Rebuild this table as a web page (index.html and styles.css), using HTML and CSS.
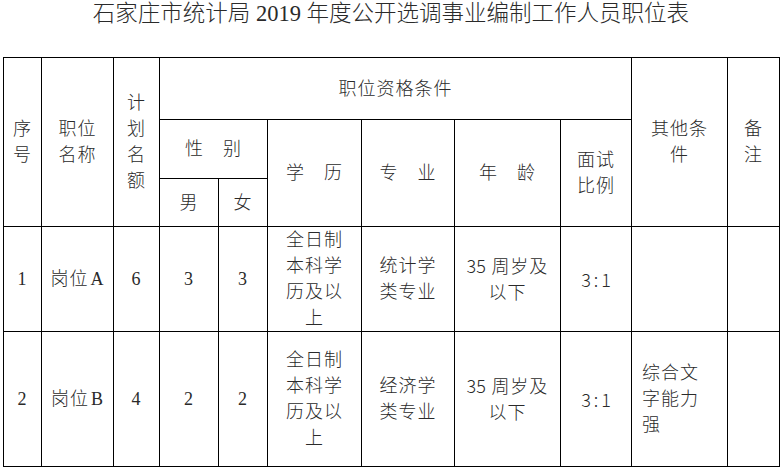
FILE: index.html
```html
<!DOCTYPE html>
<html lang="zh-CN">
<head>
<meta charset="utf-8">
<title>职位表</title>
<link rel="stylesheet" href="styles.css">
</head>
<body>
<h1 class="title">石家庄市统计局 2019 年度公开选调事业编制工作人员职位表</h1>
<table class="grid">
  <colgroup>
    <col class="c1"><col class="c2"><col class="c3"><col class="c4"><col class="c5"><col class="c6">
    <col class="c7"><col class="c8"><col class="c9"><col class="c10"><col class="c11">
  </colgroup>
  <tr class="h1">
    <td rowspan="3">序<br>号</td>
    <td rowspan="3">职位<br>名称</td>
    <td rowspan="3">计<br>划<br>名<br>额</td>
    <td colspan="6">职位资格条件</td>
    <td rowspan="3">其他条<br>件</td>
    <td rowspan="3">备<br>注</td>
  </tr>
  <tr class="h2">
    <td colspan="2">性　别</td>
    <td rowspan="2">学　历</td>
    <td rowspan="2">专　业</td>
    <td rowspan="2">年　龄</td>
    <td rowspan="2">面试<br>比例</td>
  </tr>
  <tr class="h3">
    <td>男</td>
    <td>女</td>
  </tr>
  <tr class="r1">
    <td>1</td>
    <td>岗位<span class="lat">A</span></td>
    <td>6</td>
    <td>3</td>
    <td>3</td>
    <td>全日制<br>本科学<br>历及以<br>上</td>
    <td>统计学<br>类专业</td>
    <td><span class="num">35</span> 周岁及<br>以下</td>
    <td class="ratio">3:1</td>
    <td class="left"></td>
    <td></td>
  </tr>
  <tr class="r2">
    <td>2</td>
    <td>岗位<span class="lat">B</span></td>
    <td>4</td>
    <td>2</td>
    <td>2</td>
    <td>全日制<br>本科学<br>历及以<br>上</td>
    <td>经济学<br>类专业</td>
    <td><span class="num">35</span> 周岁及<br>以下</td>
    <td class="ratio">3:1</td>
    <td class="left">综合文<br>字能力<br>强</td>
    <td></td>
  </tr>
</table>
</body>
</html>
```

FILE: styles.css
```css
html, body {
  margin: 0;
  padding: 0;
  background: #fff;
}
body {
  width: 782px;
  height: 467px;
  overflow: hidden;
  font-family: "Liberation Serif", "Noto Sans CJK SC", serif;
  font-weight: 300;
  color: #2a2a2a;
}
.title {
  margin: 0;
  font-weight: 300;
  font-size: 22.5px;
  line-height: 28px;
  text-align: center;
  color: #2a2a2a;
}
.grid {
  margin: 29px 0 0 3px;
  border-collapse: collapse;
  table-layout: fixed;
  width: 777px;
}
.grid td {
  border: 1px solid #000;
  padding: 0;
  text-align: center;
  vertical-align: middle;
  font-size: 18px;
  line-height: 26px;
  letter-spacing: 1px;
  white-space: nowrap;
}
.c1 { width: 38px; }
.c2 { width: 72px; }
.c3 { width: 46px; }
.c4 { width: 59px; }
.c5 { width: 49px; }
.c6 { width: 94px; }
.c7 { width: 93px; }
.c8 { width: 106px; }
.c9 { width: 71px; }
.c10 { width: 96px; }
.c11 { width: 52px; }
.h1 { height: 62px; }
.h2 { height: 59px; }
.h3 { height: 48px; }
.r1 { height: 104px; }
.r2 { height: 135px; }
.lat { margin-left: 2px; }
.num {
  font-family: "Noto Sans CJK SC", sans-serif;
  font-weight: 300;
  font-size: 18px;
  letter-spacing: 0;
}
.grid td.ratio {
  font-family: "Noto Sans CJK SC", sans-serif;
  font-weight: 300;
  font-size: 18px;
  letter-spacing: 3px;
  text-indent: 3px;
}
.grid td.left {
  text-align: left;
  padding-left: 10px;
}
```
